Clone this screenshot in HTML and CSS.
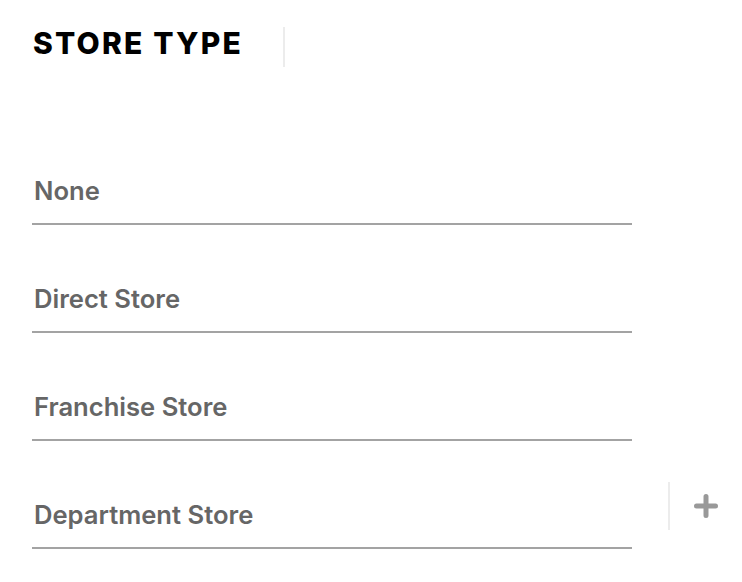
FILE: index.html
```html
<!DOCTYPE html>
<html>
<head>
<meta charset="utf-8">
<link rel="stylesheet" href="styles.css">
</head>
<body>
<div class="page">
  <header class="head">
    <h1 class="title">STORE TYPE</h1>
    <span class="vsep"></span>
  </header>
  <ul class="list">
    <li class="row"><div class="field">None</div></li>
    <li class="row"><div class="field">Direct Store</div></li>
    <li class="row"><div class="field">Franchise Store</div></li>
    <li class="row">
      <div class="field">Department Store</div>
      <div class="addwrap">
        <span class="vsep small"></span>
        <button class="add" aria-label="Add">
          <svg width="24" height="24" viewBox="0 0 24 24"><path d="M12 2.5v19M2.5 12h19" stroke="#999" stroke-width="5" stroke-linecap="round" fill="none"/></svg>
        </button>
      </div>
    </li>
  </ul>
</div>
</body>
</html>
```
FILE: styles.css
```css
html, body { margin: 0; padding: 0; background: #fff; }
body { font-family: Inter, Lato, "Noto Sans", sans-serif; }
.page { padding: 0 0 0 32px; }
.head { display: flex; align-items: center; height: 94px; }
.title {
  margin: 0 0 0 1px;
  font-size: 30px;
  font-weight: 800;
  letter-spacing: 2.2px;
  color: #000;
  line-height: 40px;
  position: relative;
  top: -4px;
}
.vsep { display: block; width: 2px; height: 40px; background: #ececec; margin-left: 40px; }
.list { list-style: none; margin: 23px 0 0; padding: 0; }
.row { display: flex; align-items: flex-end; }
.field {
  width: 598px;
  height: 89px;
  border-bottom: 2px solid #a3a3a3;
  font-size: 25.6px;
  font-weight: 600;
  color: #666;
  display: flex;
  align-items: flex-end;
  padding-left: 2px;
  padding-bottom: 17px;
}
.addwrap { display: flex; align-items: center; height: 48px; margin-bottom: 19px; }
.vsep.small { height: 48px; margin-left: 36px; }
.add { border: 0; background: none; padding: 0; margin-left: 24px; display: flex; }
```
